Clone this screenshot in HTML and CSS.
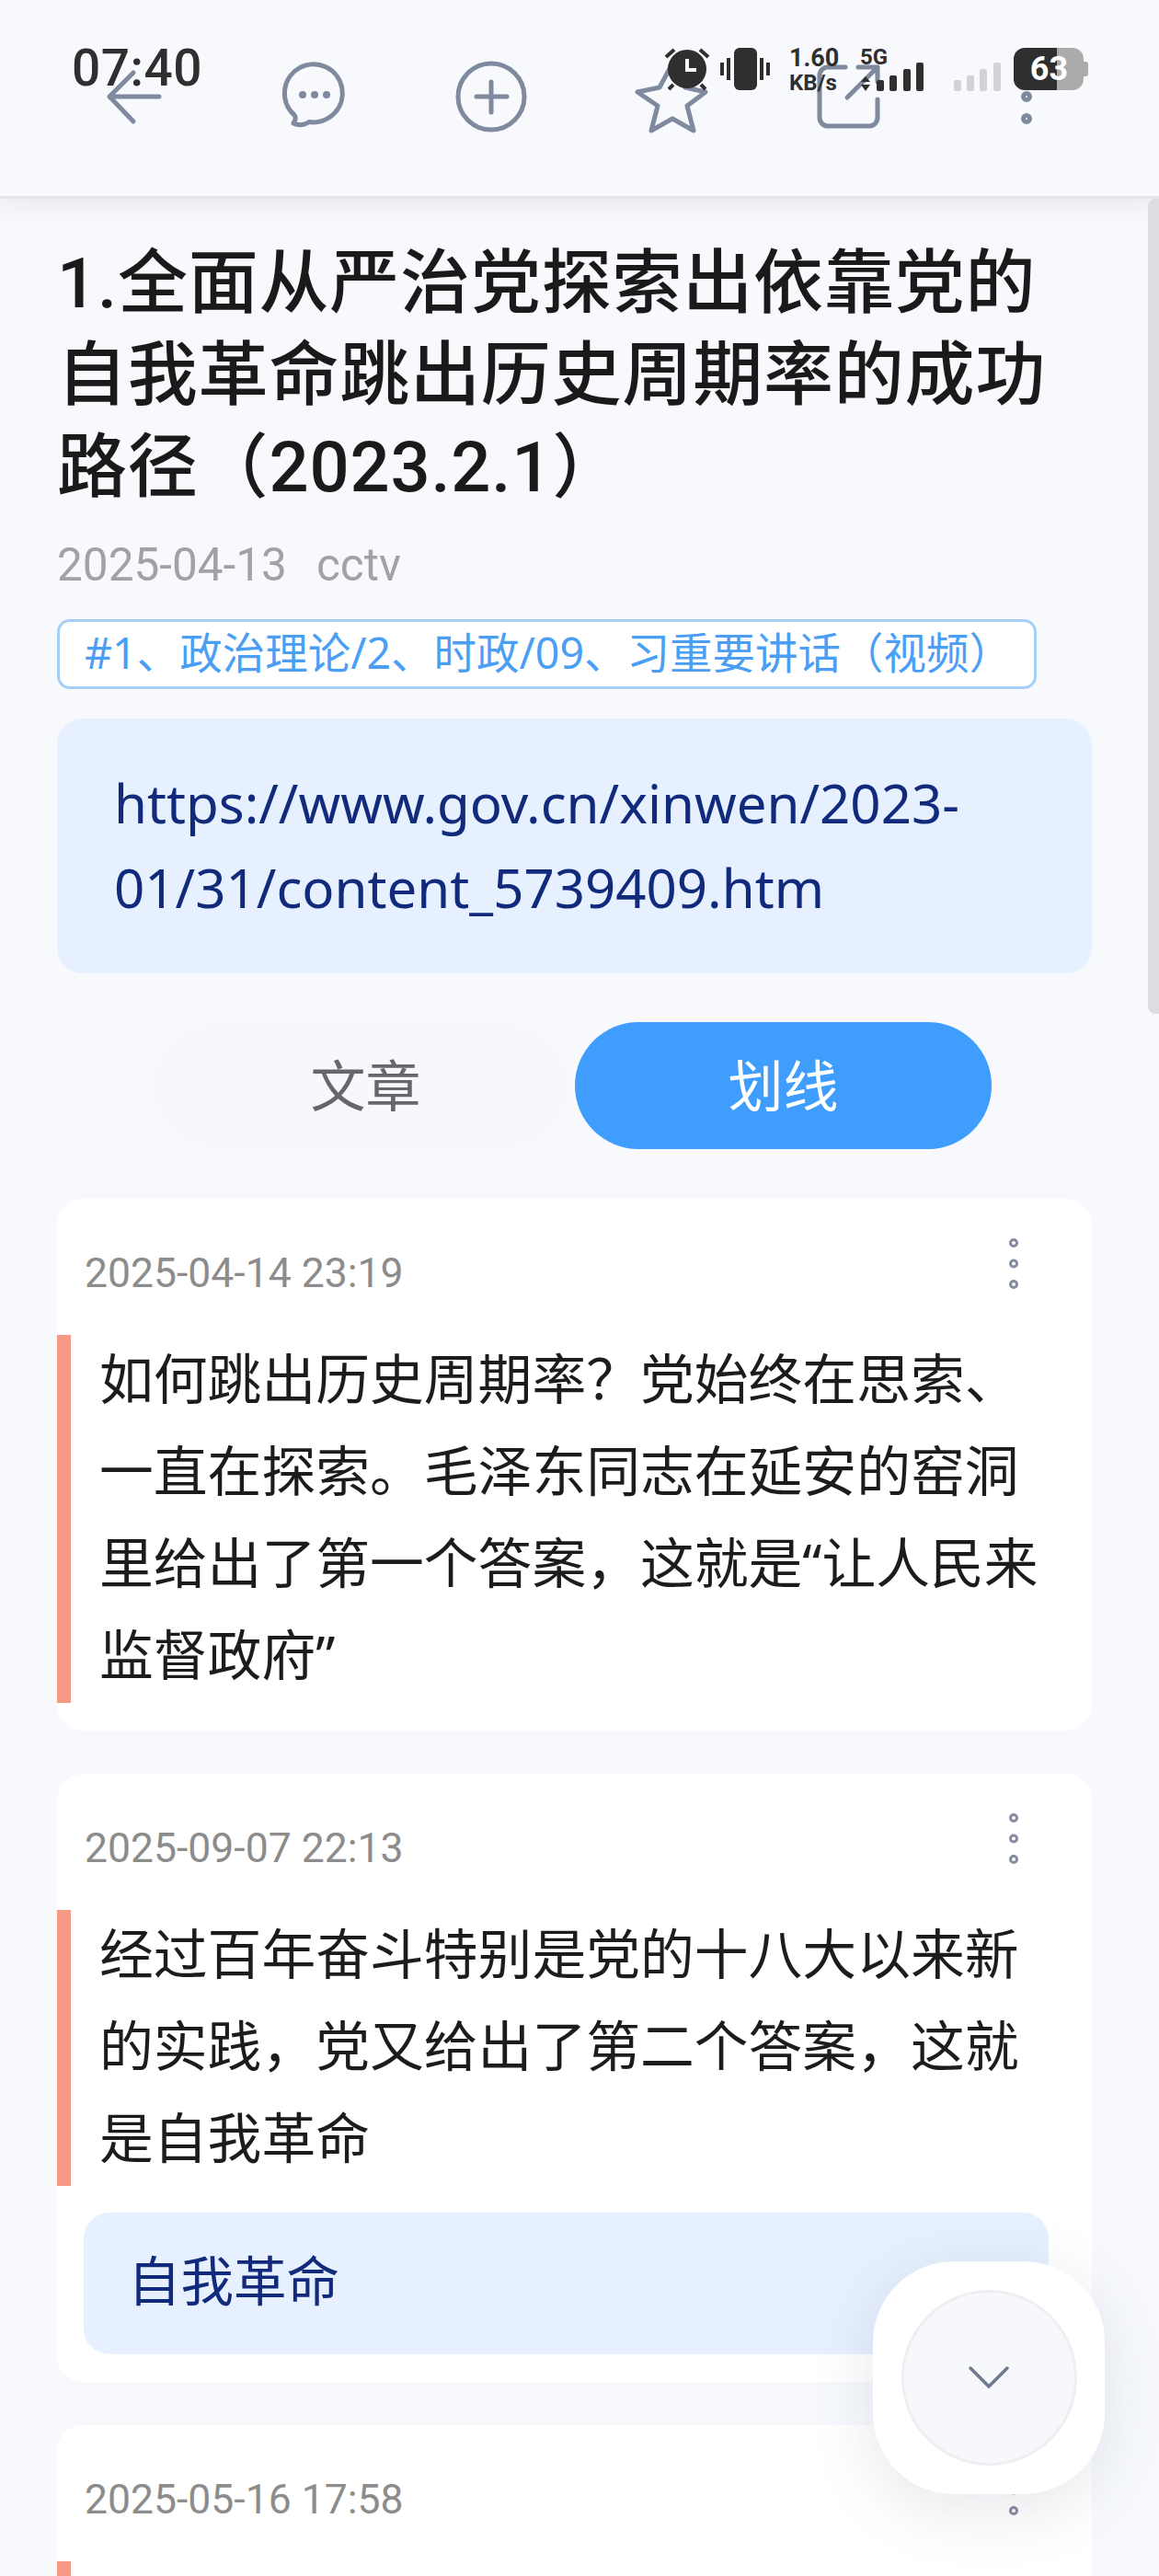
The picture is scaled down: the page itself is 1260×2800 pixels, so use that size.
FILE: index.html
```html
<!DOCTYPE html>
<html lang="zh-CN">
<head>
<meta charset="utf-8">
<title>划线</title>
<link rel="stylesheet" href="styles.css">
</head>
<body>
<div class="page">
  <header class="nav">
    <div class="nav-cell"><svg class="ico" width="70" height="70" viewBox="0 0 70 70"><path d="M62 35H8M34 9 8 35l26 27"/></svg></div>
    <div class="nav-cell nudge-chat"><svg class="ico" width="76" height="76" viewBox="0 0 76 76"><path d="M27 68c-4 1-9 .5-12-1 2-3 3.500-6 1-9a31.500 31.500 0 1 1 16 7.500c-1.500 1-3 2-5 2.500z"/><circle class="solid" cx="25" cy="36" r="4"/><circle class="solid" cx="38" cy="36" r="4"/><circle class="solid" cx="51" cy="36" r="4"/></svg></div>
    <div class="nav-cell"><svg class="ico" width="80" height="80" viewBox="0 0 80 80"><circle cx="40" cy="40" r="36"/><path d="M24 40h33M40 24v33"/></svg></div>
    <div class="nav-cell nudge-star"><svg class="ico" width="84" height="84" viewBox="0 0 84 84"><path d="M42 6 56 32 78 37 58 52 65 79 42 66 19 79 26 52 4 37 28 32z"/></svg></div>
    <div class="nav-cell"><svg class="ico" width="76" height="76" viewBox="0 0 76 76"><path d="M35 6H16a9 9 0 0 0-9 9v46a9 9 0 0 0 9 9h45a9 9 0 0 0 9-9V41M49 6h21v16M37 39 70 6"/></svg></div>
    <div class="nav-cell"><svg class="ico" width="14" height="64" viewBox="0 0 14 64"><circle cx="7" cy="7" r="3.500"/><circle cx="7" cy="32" r="3.500"/><circle cx="7" cy="56" r="3.500"/></svg></div>
  </header>

  <div class="status">
    <span class="clock">07:40</span>
    <svg class="st-alarm" width="50" height="48" viewBox="0 0 50 48"><circle cx="25" cy="24" r="21" fill="#2e2f2e"/><path d="M25 13v12h10" fill="none" stroke="#f7f9fd" stroke-width="4"/><path d="M2 11 11 3M39 3l9 8M5 46l5-5M45 46l-5-5" stroke="#2e2f2e" stroke-width="4" fill="none"/></svg>
    <svg class="st-vib" width="54" height="46" viewBox="0 0 54 46"><rect x="15" y="0" width="25" height="46" rx="6" fill="#2e2f2e"/><rect x="0" y="16" width="4" height="14" fill="#2e2f2e"/><rect x="7" y="11" width="4" height="24" fill="#2e2f2e"/><rect x="43" y="11" width="4" height="24" fill="#2e2f2e"/><rect x="50" y="16" width="4" height="14" fill="#2e2f2e"/></svg>
    <div class="speed"><span class="speed-a">1.60</span><span class="speed-b">KB/s</span></div>
    <div class="net">
      <span class="five">5G</span>
      <svg width="12" height="16" viewBox="0 0 12 16" class="updown"><path d="M6 0l5 6H1zM6 16 1 9h10z" fill="#2e2f2e"/></svg>
    </div>
    <svg class="st-sig" width="51" height="31" viewBox="0 0 51 31" fill="#2e2f2e"><rect x="0" y="19" width="8" height="12" rx="2"/><rect x="14" y="14" width="8" height="17" rx="2"/><rect x="29" y="7" width="8" height="24" rx="2"/><rect x="43" y="0" width="8" height="31" rx="2"/></svg>
    <svg class="st-sig2" width="51" height="31" viewBox="0 0 51 31" fill="#d1d3d7"><rect x="0" y="19" width="8" height="12" rx="2"/><rect x="14" y="14" width="8" height="17" rx="2"/><rect x="28" y="7" width="8" height="24" rx="2"/><rect x="43" y="0" width="8" height="31" rx="2"/></svg>
    <div class="battery"><span class="batt-text">63</span></div>
    <span class="batt-tip"></span>
  </div>

  <main class="content">
    <h1 class="title">1.全面从严治党探索出依靠党的自我革命跳出历史周期率的成功路径（2023.2.1）</h1>
    <div class="meta"><span>2025-04-13</span><span>cctv</span></div>
    <span class="tag">#1、政治理论/2、时政/09、习重要讲话（视频）</span>
    <div class="url">https://www.gov.cn/xinwen/2023-01/31/content_5739409.htm</div>

    <div class="tabs">
      <div class="tab tab-off">文章</div>
      <div class="tab tab-on">划线</div>
    </div>

    <section class="card">
      <div class="card-head">
        <span class="stamp">2025-04-14 23:19</span>
        <svg class="ico dots" width="14" height="60" viewBox="0 0 14 60"><circle cx="7" cy="7" r="3.500"/><circle cx="7" cy="29.500" r="3.500"/><circle cx="7" cy="52" r="3.500"/></svg>
      </div>
      <div class="mark"><p class="mark-text">如何跳出历史周期率？党始终在思索、一直在探索。毛泽东同志在延安的窑洞里给出了第一个答案，这就是“让人民来监督政府”</p></div>
    </section>

    <section class="card">
      <div class="card-head">
        <span class="stamp">2025-09-07 22:13</span>
        <svg class="ico dots" width="14" height="60" viewBox="0 0 14 60"><circle cx="7" cy="7" r="3.500"/><circle cx="7" cy="29.500" r="3.500"/><circle cx="7" cy="52" r="3.500"/></svg>
      </div>
      <div class="mark"><p class="mark-text">经过百年奋斗特别是党的十八大以来新的实践，党又给出了第二个答案，这就是自我革命</p></div>
      <div class="note">自我革命</div>
    </section>

    <section class="card">
      <div class="card-head">
        <span class="stamp">2025-05-16 17:58</span>
        <svg class="ico dots" width="14" height="60" viewBox="0 0 14 60"><circle cx="7" cy="7" r="3.500"/><circle cx="7" cy="29.500" r="3.500"/><circle cx="7" cy="52" r="3.500"/></svg>
      </div>
      <div class="mark"><p class="mark-text">&nbsp;</p></div>
    </section>
  </main>

  <div class="scrollbar"></div>

  <div class="fab">
    <div class="fab-inner">
      <svg width="46" height="28" viewBox="0 0 46 28"><path d="M3 3 23 23 43 3" fill="none" stroke="#6f7a8f" stroke-width="3.500" stroke-linecap="round"/></svg>
    </div>
  </div>
</div>
</body>
</html>
```

FILE: styles.css
```css
* { box-sizing: border-box; }
html, body { margin: 0; padding: 0; }
body {
  background: #f7f9fd;
  font-family: "Noto Sans", "Noto Sans CJK SC", sans-serif;
  color: #1c1c1c;
}
.page { position: relative; width: 1260px; height: 2800px; overflow: hidden; background: #f7f9fd; }

/* nav */
.nav {
  display: flex;
  align-items: center;
  height: 216px;
  padding: 0 0 3px 49px;
  background: #f7f9fd;
  border-bottom: 3px solid #e6e7ea;
  box-shadow: 0 6px 28px rgba(0, 0, 0, .07);
  position: relative;
}
.nav-cell { width: 194px; display: flex; justify-content: center; align-items: center; }
.nudge-chat { padding-left: 3px; }
.nudge-star { padding-left: 6px; }
.ico { fill: none; stroke: #7f8a9e; stroke-width: 5; stroke-linecap: round; stroke-linejoin: round; overflow: visible; }
.ico .solid { fill: #7f8a9e; stroke: none; }

/* status bar */
.status {
  position: absolute; top: 0; left: 0; width: 100%; height: 110px;
  display: flex; align-items: flex-start;
  color: #2e2f2e;
}
.clock { position: absolute; left: 78px; top: 43px; font: 500 55px/62px Roboto, sans-serif; letter-spacing: .5px; }
.st-alarm { position: absolute; left: 722px; top: 51px; }
.st-vib { position: absolute; left: 783px; top: 52px; }
.speed { position: absolute; left: 858px; top: 48px; display: flex; flex-direction: column; font-family: Roboto, sans-serif; font-weight: 700; }
.speed-a { font-size: 27px; line-height: 30px; }
.speed-b { font-size: 24px; line-height: 26px; margin-top: -1px; }
.net { position: absolute; left: 935px; top: 48px; }
.five { display: block; font: 700 24px/28px Roboto, sans-serif; }
.updown { position: absolute; left: 0; top: 35px; }
.st-sig { position: absolute; left: 953px; top: 68px; }
.st-sig2 { position: absolute; left: 1037px; top: 68px; }
.battery {
  position: absolute; left: 1102px; top: 52px; width: 76px; height: 46px;
  border-radius: 12px;
  background: linear-gradient(90deg, #2e2f2e 0 47px, #ababab 47px 76px);
  display: flex; align-items: center; justify-content: center;
}
.batt-text { color: #fff; font: 700 36px/46px Roboto, sans-serif; margin-left: 1px; }
.batt-tip { position: absolute; left: 1178px; top: 67px; width: 5px; height: 16px; background: #ababab; border-radius: 0 3px 3px 0; }

/* content */
.content { padding: 42px 73px 0 62px; display: flex; flex-direction: column; align-items: flex-start; }
.title { margin: 0; width: 1125px; font-family: Roboto, "Noto Sans CJK SC", sans-serif; font-size: 76px; line-height: 100px; font-weight: 500; letter-spacing: .8px; color: #1a1a1a; }
.meta { margin-top: 26px; height: 60px; display: flex; gap: 32px; color: #a0a2a8; font: 400 49.500px/60px Roboto, sans-serif; }
.tag {
  margin-top: 29px; height: 76px; width: 1065px; padding-left: 27px;
  border: 3px solid #a6cff5; border-radius: 14px; background: #fff;
  color: #4a9ff5; font-size: 46.500px; line-height: 66px; white-space: nowrap;
}
.url {
  margin-top: 32px; width: 1125px; height: 277px; padding: 46px 50px 0 62px;
  background: #e6f0fe; border-radius: 28px;
  color: #112a7c; font-size: 58.200px; line-height: 92px;
}
.tabs { margin: 53px 0 0 103px; display: flex; gap: 7px; }
.tab {
  width: 453px; height: 138px; border-radius: 69px;
  display: flex; align-items: center; justify-content: center;
  font-size: 60px; padding-bottom: 6px; color: #666769; background: #f6f8fc;
}
.tab-off { padding-left: 12px; }
.tab-on { background: #3f9dfd; color: #fff; }

.card { width: 1125px; margin-top: 47px; padding-bottom: 30px; background: #fff; border-radius: 28px; }
.tabs + .card { margin-top: 54px; }
.card-head { height: 148px; padding: 49px 78px 0 30px; display: flex; justify-content: space-between; align-items: flex-start; }
.stamp { font: 400 44.500px/56px Roboto, sans-serif; color: #8c8c8c; margin-top: 4px; }
.dots { margin-top: -8px; stroke-width: 3; stroke: #858ba0; }
.mark {
  display: flow-root;
  padding-left: 31px; margin-right: 47px;
  border-left: 15px solid #f69a85;
}
.mark-text { margin: -3px 0 3px; font-size: 58.800px; line-height: 100px; color: #1c1c1c; }
.note {
  margin: 29px 47px 0 29px; height: 154px; padding: 0 0 5px 48px;
  background: #e6f0fe; border-radius: 28px;
  color: #112a7c; font-size: 57.500px; line-height: 149px;
}
.scrollbar { position: absolute; right: 0; top: 216px; width: 12px; height: 886px; background: #dcdde0; border-radius: 8px 0 0 8px; }
.fab {
  position: absolute; left: 949px; top: 2458px; width: 252px; height: 253px;
  background: #fff; border-radius: 88px;
  box-shadow: 0 16px 70px rgba(60, 70, 100, .13);
  display: flex; align-items: center; justify-content: center;
}
.fab-inner {
  width: 191px; height: 191px; border-radius: 50%;
  background: #f6f8fc; border: 3px solid #eeeff1;
  display: flex; align-items: center; justify-content: center;
}
```
